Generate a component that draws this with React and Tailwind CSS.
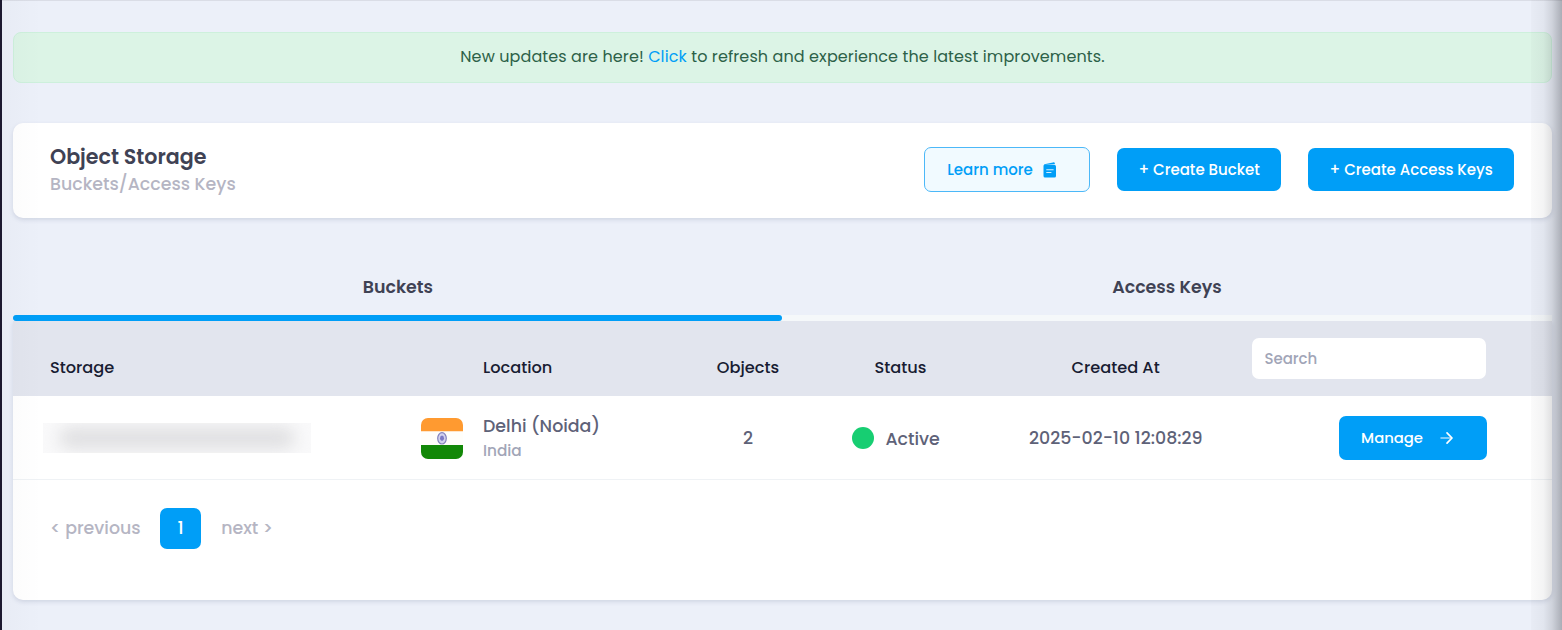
import React from "react";

const columns =
  "grid grid-cols-[370px_234px_188px_187px_202px_1fr]";

function LearnIcon() {
  return (
    <svg width="14" height="16" viewBox="0 0 14 16" className="shrink-0">
      <path d="M1.300 2.300 10 .4q1.600-.3 1.800.8v1L1 2.900Z" fill="#009ef7" />
      <path d="M.5 3.600q0-.7.8-.7H11.700q1.300.1 1.300 1.400V14q0 1.500-1.500 1.500H2Q.5 15.500.5 14Z" fill="#009ef7" />
      <path d="M3.700 7.700h6.500M3.700 10.500h4.300" stroke="#d5effd" strokeWidth="1.100" strokeLinecap="round" />
    </svg>
  );
}

function ArrowIcon() {
  return (
    <svg width="14" height="14" viewBox="0 0 14 14" fill="none" stroke="white" strokeLinecap="round" strokeLinejoin="round" className="shrink-0">
      <path d="M1 7h10.500" strokeWidth="1.500" opacity=".65" />
      <path d="m7 1.800 5 5.200-5 5.200" strokeWidth="1.700" />
    </svg>
  );
}

function IndiaFlag() {
  return (
    <svg width="42" height="41" viewBox="0 0 42 41" className="shrink-0 rounded-[7px]">
      <path fill="#ff9a30" d="M0 0h42v13.500H0z" />
      <path fill="#fffefa" d="M0 13.500h42V27H0z" />
      <path fill="#128807" d="M0 27h42v14H0z" />
      <ellipse cx="21" cy="20.300" rx="4.300" ry="5.700" fill="#d3d2ee" stroke="#8583bd" strokeWidth="1.200" />
      <ellipse cx="21" cy="20.300" rx="2" ry="2.700" fill="#7c79c4" />
    </svg>
  );
}

export default function App() {
  return (
    <div className="relative h-[630px] w-full overflow-hidden border-l-2 border-[#1c1930] bg-[#ecf0f9] pr-[10.5px] pl-[11.4px] font-['Poppins','Inter',sans-serif] font-medium whitespace-nowrap">
      <div className="-mr-[10.5px] -ml-[11.4px] h-px bg-[#dadde6]" />

      <div className="mt-[31px] flex h-[51px] items-center justify-center rounded-lg border border-[#cdf0dc] bg-[#dcf4e6] pb-0.5 text-base font-normal text-[#2c6148]">
        <span className="tracking-[0.1px]">
          New updates are here! <a className="text-[#009ef7]">Click</a> to refresh and experience the latest improvements.
        </span>
      </div>

      <header className="mt-10 flex h-[95px] items-center justify-between rounded-[10px] bg-white pr-[37.3px] pl-[36.6px] shadow-[0_2px_4px_rgba(80,90,130,0.17)]">
        <div className="-mt-0.5">
          <h1 className="text-[20.6px] leading-7 font-semibold text-[#3f4254]">Object Storage</h1>
          <p className="text-[17.4px] leading-[26px] text-[#b5b5c3]">Buckets/Access Keys</p>
        </div>
        <div className="-mt-0.5 flex items-center gap-[27px] text-[15px]">
          <button className="flex h-[45px] w-[166px] items-center gap-2.5 rounded-[7px] border border-[#4cb8f8] bg-[#f1faff] pl-[22px] text-[#009ef7]">
            <span className="pt-0.5">Learn more</span>
            <LearnIcon />
          </button>
          <button className="h-[43px] w-[164px] rounded-[7px] bg-[#009ef7] pt-0.5 text-white">+ Create Bucket</button>
          <button className="h-[43px] w-[206px] rounded-[7px] bg-[#009ef7] pt-0.5 text-white">+ Create Access Keys</button>
        </div>
      </header>

      <nav className="mt-10 grid h-[63px] grid-cols-2 text-center text-[17.4px] font-semibold text-[#3f4254]">
        <div className="flex flex-col justify-between">
          <span className="pt-4 leading-[26px]">Buckets</span>
          <div className="bg-[#f5f8fa]">
            <div className="h-1.5 rounded-full bg-[#009ef7]" />
          </div>
        </div>
        <div className="flex flex-col justify-between">
          <span className="pt-4 leading-[26px]">Access Keys</span>
          <div className="h-1.5 bg-[#f5f8fa]" />
        </div>
      </nav>

      <section className="h-[279px] rounded-b-[10px] bg-white shadow-[0_2px_4px_rgba(80,90,130,0.17)]">
        <div className={`${columns} h-[75.4px] bg-[#e2e5ee] pt-[17px] pl-[36.6px] text-[16.2px] text-[#181c32]`}>
          <span className="pt-4.5">Storage</span>
          <span className="pt-4.5 pl-[63px]">Location</span>
          <span className="pt-4.5 text-center">Objects</span>
          <span className="pt-4.5 pl-[32.5px]">Status</span>
          <span className="pt-4.5 pl-[42.5px]">Created At</span>
          <input
            placeholder="Search"
            className="ml-[21.4px] h-[41px] w-[234px] rounded-[7px] bg-white px-3 text-[15px] placeholder:text-[#a1a5b7]"
          />
        </div>

        <div className={`${columns} h-[83.6px] items-center border-b border-[#eff2f5] pl-[36.6px] text-[17.4px] text-[#5e6278]`}>
          <div className="-ml-[7px] h-[30px] w-[268px] overflow-hidden bg-[#f9f9fa]">
            <div className="mx-4 mt-1 h-[22px] rounded-full bg-[#e0e0e2] blur-[8px]" />
          </div>
          <div className="flex items-center gap-5 pt-px pl-px">
            <IndiaFlag />
            <div className="-mt-px">
              <p className="leading-[26px]">Delhi (Noida)</p>
              <p className="text-[15.3px] leading-[23px] text-[#a1a5b7]">India</p>
            </div>
          </div>
          <span className="text-center">2</span>
          <div className="flex items-center gap-[11px] pt-px pl-[10.5px]">
            <i className="size-[22px] rounded-full bg-[#17ce72]" />
            <span className="pt-0.5">Active</span>
          </div>
          <span>2025-02-10 12:08:29</span>
          <button className="mr-[64.4px] ml-auto flex h-11 w-[148px] items-center gap-[17px] rounded-[7px] bg-[#009ef7] pl-[22px] text-[14.8px] text-white">
            <span className="pt-px">Manage</span>
            <ArrowIcon />
          </button>
        </div>

        <div className="mt-7 flex h-[41px] items-center gap-5 pl-[36.6px] text-[17.4px] text-[#b5b5c3]">
          <span>&lt; previous</span>
          <span className="-ml-[0.5px] flex size-[41px] items-center justify-center rounded-[7px] bg-[#009ef7] text-white">1</span>
          <span>next &gt;</span>
        </div>
      </section>

      <div className="pointer-events-none absolute inset-y-0 left-0 w-10 bg-linear-to-r from-[#1c1930]/2 to-transparent" />
      <div className="pointer-events-none absolute inset-y-0 right-0 w-[31px] bg-[linear-gradient(to_right,rgba(30,32,40,0.02),rgba(30,32,40,0.05)_40%,rgba(30,32,40,0.14)_68%,rgba(30,32,40,0.32))]" />
    </div>
  );
}
